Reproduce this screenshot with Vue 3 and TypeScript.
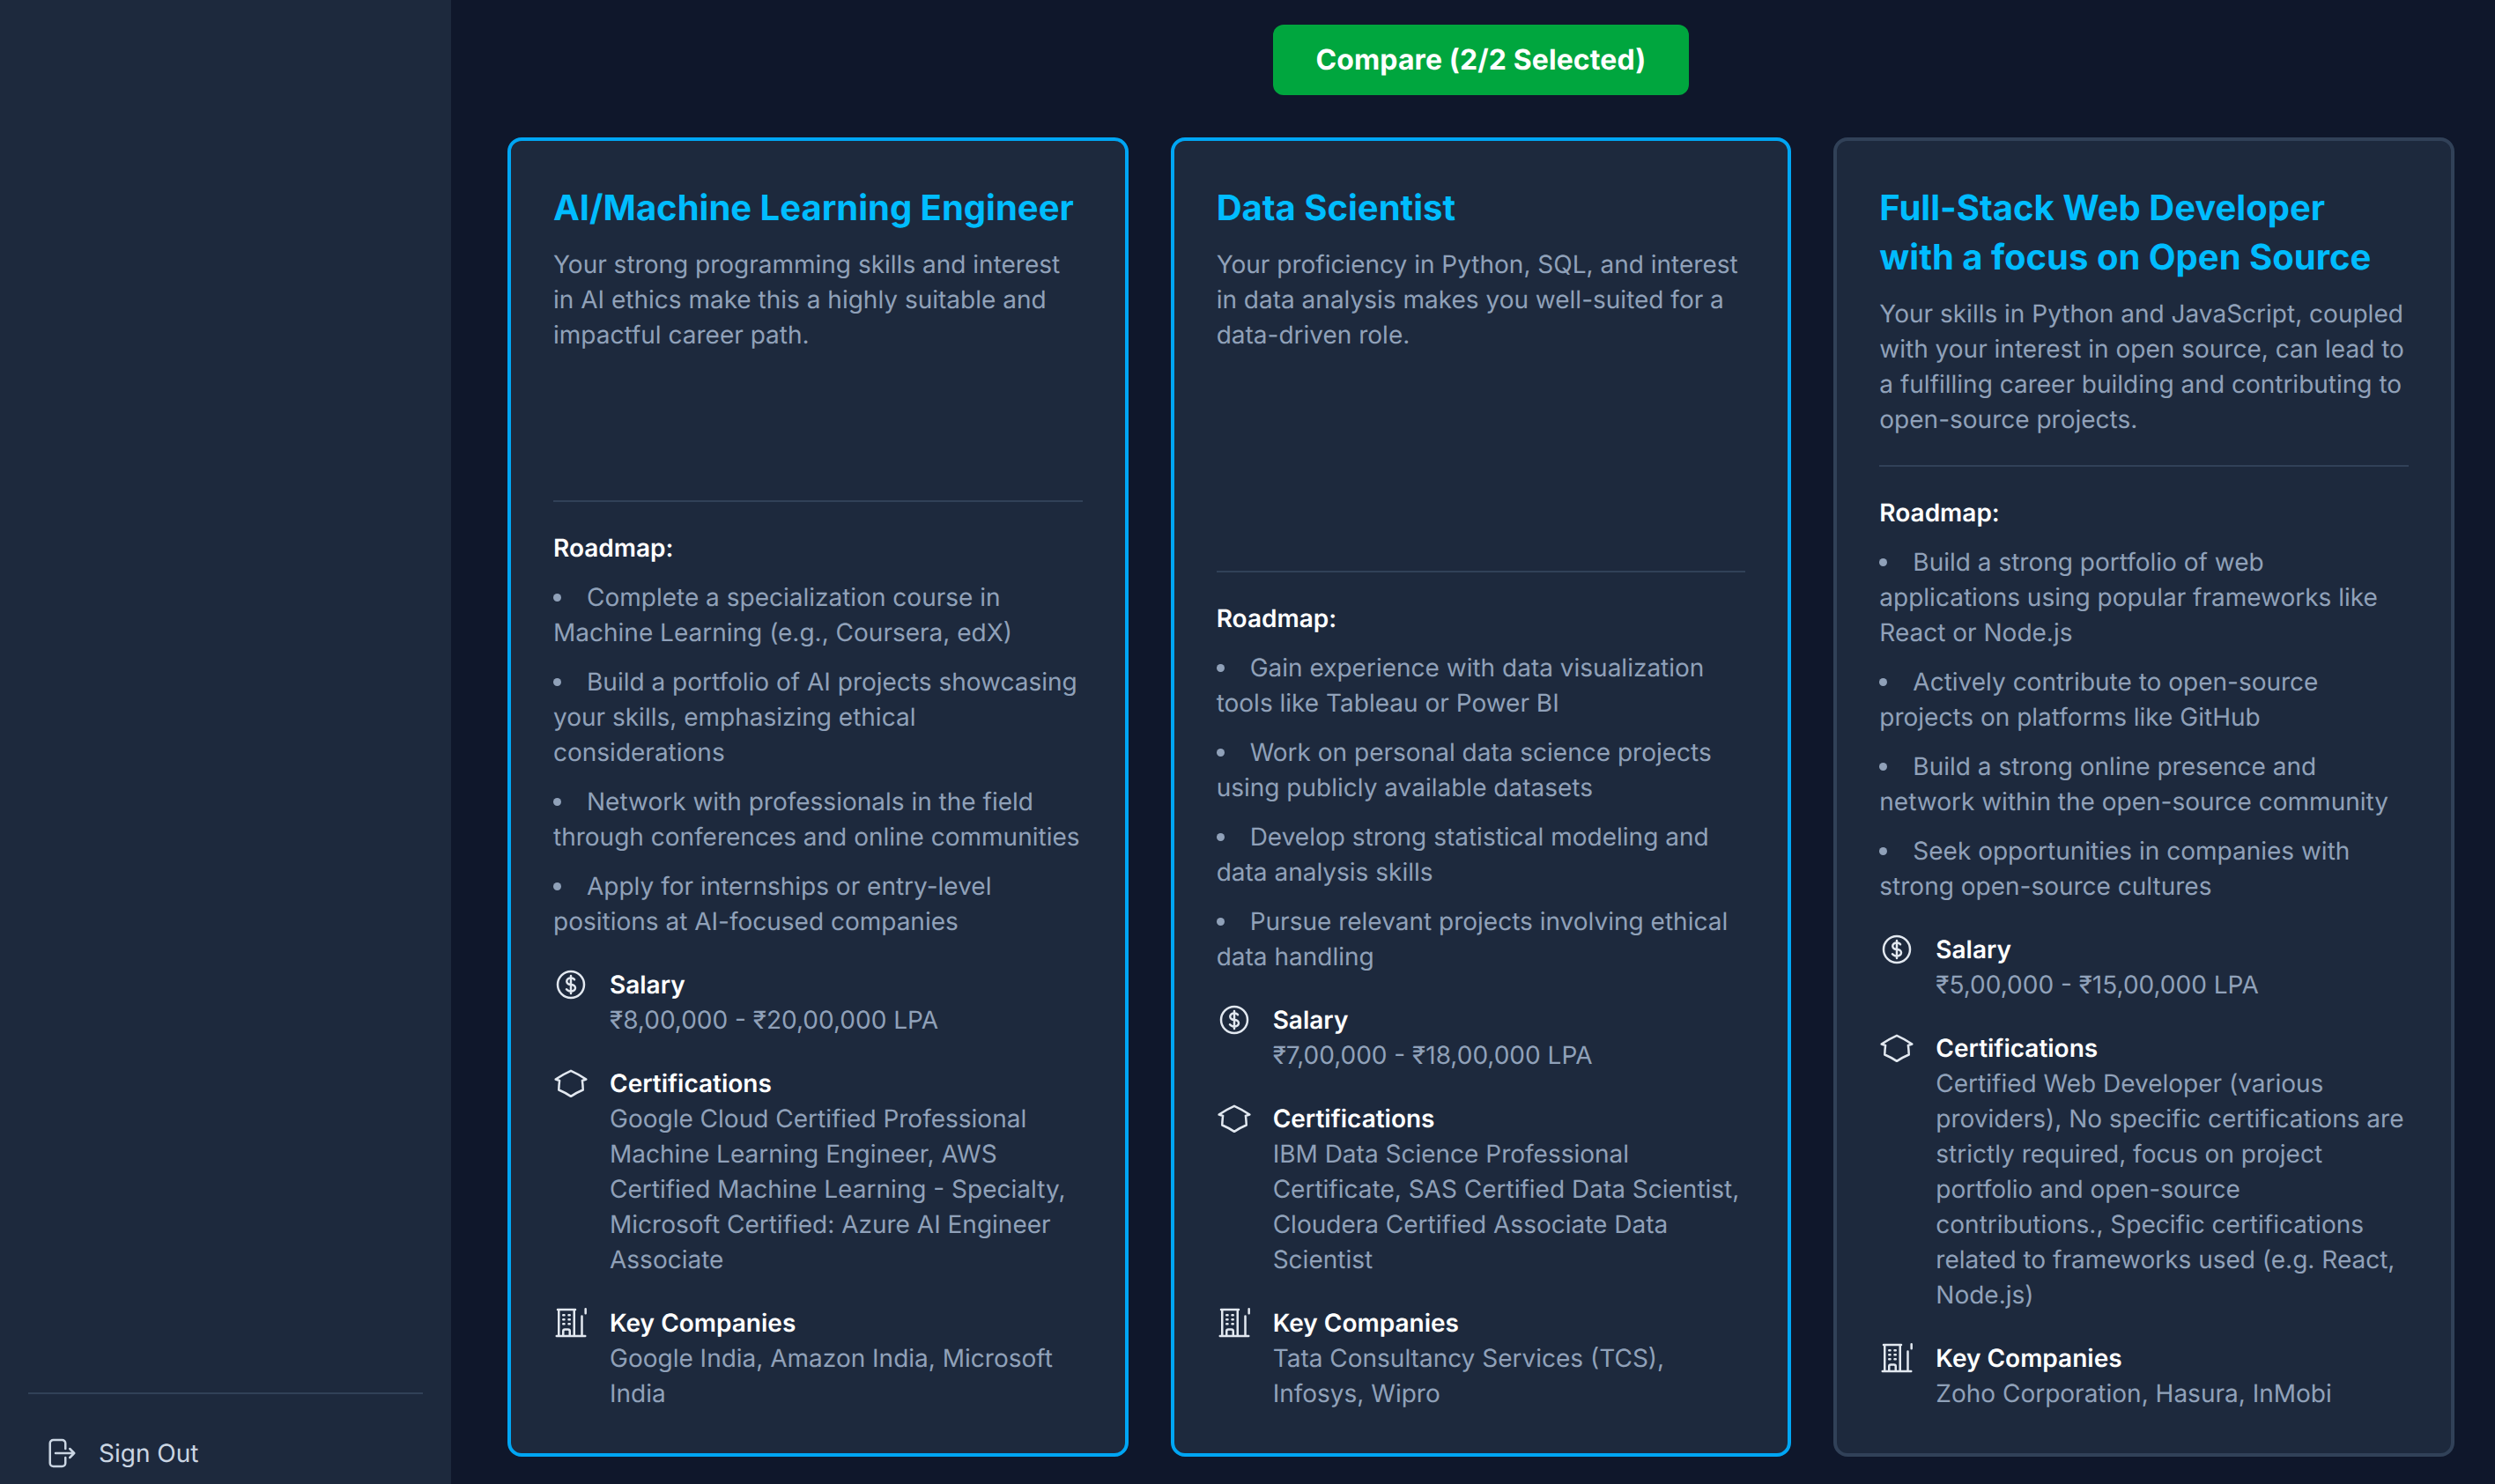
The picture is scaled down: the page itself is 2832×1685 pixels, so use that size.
<template>
  <div class="layout">
    <aside class="sidebar">
      <div class="sidebar-footer">
        <button class="sign-out">
          <svg class="icon" viewBox="0 0 24 24" fill="none" stroke="currentColor" stroke-width="1.5" stroke-linecap="round" stroke-linejoin="round">
            <path d="M15.75 9V5.25A2.25 2.25 0 0 0 13.5 3h-6a2.25 2.25 0 0 0-2.25 2.25v13.5A2.25 2.25 0 0 0 7.5 21h6a2.25 2.25 0 0 0 2.25-2.25V15m3 0 3-3m0 0-3-3m3 3H9" />
          </svg>
          <span>Sign Out</span>
        </button>
      </div>
    </aside>

    <main class="main">
      <div class="compare-row">
        <button class="compare-btn">Compare (2/2 Selected)</button>
      </div>

      <div class="cards">
        <article
          v-for="career in careers"
          :key="career.title"
          class="card"
          :class="{ selected: career.selected }"
        >
          <h2 class="title">{{ career.title }}</h2>
          <p class="desc">{{ career.desc }}</p>

          <div class="details">
            <h3 class="label">Roadmap:</h3>
            <ul class="roadmap">
              <li v-for="step in career.roadmap" :key="step">{{ step }}</li>
            </ul>

            <div class="info">
              <svg class="icon" viewBox="0 0 24 24" fill="none" stroke="currentColor" stroke-width="1.5" stroke-linecap="round" stroke-linejoin="round">
                <path d="M12 6v12m-3-2.818.879.659c1.171.879 3.07.879 4.242 0 1.172-.879 1.172-2.303 0-3.182C13.536 12.219 12.768 12 12 12c-.725 0-1.45-.22-2.003-.659-1.106-.879-1.106-2.303 0-3.182s2.9-.879 4.006 0l.415.33M21 12a9 9 0 1 1-18 0 9 9 0 0 1 18 0Z" />
              </svg>
              <div>
                <h4 class="label">Salary</h4>
                <p class="value">{{ career.salary }}</p>
              </div>
            </div>

            <div class="info">
              <svg class="icon" viewBox="0 0 24 24" fill="none" stroke="currentColor" stroke-width="1.5" stroke-linecap="round" stroke-linejoin="round">
                <path d="M4.26 10.147a60.438 60.438 0 0 0-.491 6.347A48.62 48.62 0 0 1 12 20.904a48.62 48.62 0 0 1 8.232-4.41 60.46 60.46 0 0 0-.491-6.347m-15.482 0a50.636 50.636 0 0 0-2.658-.813A59.906 59.906 0 0 1 12 3.493a59.903 59.903 0 0 1 10.399 5.84c-.896.248-1.783.52-2.658.814" />
              </svg>
              <div>
                <h4 class="label">Certifications</h4>
                <p class="value">{{ career.certifications }}</p>
              </div>
            </div>

            <div class="info">
              <svg class="icon" viewBox="0 0 24 24" fill="none" stroke="currentColor" stroke-width="1.5" stroke-linecap="round" stroke-linejoin="round">
                <path d="M2.25 21h19.5M3.75 3v18M14.25 3v18M19.5 7.5V21M22 2.5v3M6.75 6.75h.75m-.75 3h.75m-.75 3h.75m3-6h.75m-.75 3h.75m-.75 3h.75M6.75 21v-3.375c0-.621.504-1.125 1.125-1.125h2.25c.621 0 1.125.504 1.125 1.125V21M3 3h12" />
              </svg>
              <div>
                <h4 class="label">Key Companies</h4>
                <p class="value">{{ career.companies }}</p>
              </div>
            </div>
          </div>
        </article>
      </div>
    </main>
  </div>
</template>

<script setup lang="ts">
interface Career {
  title: string
  desc: string
  roadmap: string[]
  salary: string
  certifications: string
  companies: string
  selected: boolean
}

const careers: Career[] = [
  {
    title: 'AI/Machine Learning Engineer',
    desc: 'Your strong programming skills and interest in AI ethics make this a highly suitable and impactful career path.',
    roadmap: [
      'Complete a specialization course in Machine Learning (e.g., Coursera, edX)',
      'Build a portfolio of AI projects showcasing your skills, emphasizing ethical considerations',
      'Network with professionals in the field through conferences and online communities',
      'Apply for internships or entry-level positions at AI-focused companies'
    ],
    salary: '₹8,00,000 - ₹20,00,000 LPA',
    certifications: 'Google Cloud Certified Professional Machine Learning Engineer, AWS Certified Machine Learning - Specialty, Microsoft Certified: Azure AI Engineer Associate',
    companies: 'Google India, Amazon India, Microsoft India',
    selected: true
  },
  {
    title: 'Data Scientist',
    desc: 'Your proficiency in Python, SQL, and interest in data analysis makes you well-suited for a data-driven role.',
    roadmap: [
      'Gain experience with data visualization tools like Tableau or Power BI',
      'Work on personal data science projects using publicly available datasets',
      'Develop strong statistical modeling and data analysis skills',
      'Pursue relevant projects involving ethical data handling'
    ],
    salary: '₹7,00,000 - ₹18,00,000 LPA',
    certifications: 'IBM Data Science Professional Certificate, SAS Certified Data Scientist, Cloudera Certified Associate Data Scientist',
    companies: 'Tata Consultancy Services (TCS), Infosys, Wipro',
    selected: true
  },
  {
    title: 'Full-Stack Web Developer with a focus on Open Source',
    desc: 'Your skills in Python and JavaScript, coupled with your interest in open source, can lead to a fulfilling career building and contributing to open-source projects.',
    roadmap: [
      'Build a strong portfolio of web applications using popular frameworks like React or Node.js',
      'Actively contribute to open-source projects on platforms like GitHub',
      'Build a strong online presence and network within the open-source community',
      'Seek opportunities in companies with strong open-source cultures'
    ],
    salary: '₹5,00,000 - ₹15,00,000 LPA',
    certifications: 'Certified Web Developer (various providers), No specific certifications are strictly required, focus on project portfolio and open-source contributions., Specific certifications related to frameworks used (e.g. React, Node.js)',
    companies: 'Zoho Corporation, Hasura, InMobi',
    selected: false
  }
]
</script>

<style>
html,
body {
  margin: 0;
  background: #0f172b;
}
</style>

<style scoped>
.layout {
  display: flex;
  height: 1685px;
  overflow: hidden;
  background: #0f172b;
  font-family: Inter, "Liberation Sans", sans-serif;
  font-size: 28px;
  line-height: 40px;
  text-rendering: geometricPrecision;
}

.sidebar {
  flex: 0 0 512px;
  display: flex;
  flex-direction: column;
  justify-content: flex-end;
  box-sizing: border-box;
  padding: 0 32px;
  background: #1d293d;
}

.sidebar-footer {
  box-sizing: border-box;
  height: 104px;
  border-top: 2px solid #314158;
  padding-top: 47px;
}

.sign-out {
  display: flex;
  align-items: center;
  gap: 24px;
  padding: 0 16px;
  border: 0;
  background: none;
  color: #cad5e2;
  font: inherit;
  text-rendering: inherit;
}

.main {
  flex: 1;
  min-width: 0;
  box-sizing: border-box;
  padding: 28px 46px 0 64px;
}

.compare-row {
  display: flex;
  justify-content: center;
  margin-bottom: 48px;
}

.compare-btn {
  padding: 16px 49px;
  border: 0;
  border-radius: 12px;
  background: #00a63e;
  color: #fff;
  font: inherit;
  font-size: 32px;
  line-height: 48px;
  font-weight: 700;
  letter-spacing: 0.1px;
  text-rendering: inherit;
}

.cards {
  display: grid;
  grid-template-columns: repeat(3, 1fr);
  gap: 48px;
}

.card {
  display: flex;
  flex-direction: column;
  padding: 48px;
  border: 4px solid #314158;
  border-radius: 16px;
  background: #1d293d;
  color: #90a1b9;
}

.card.selected {
  border-color: #00a6f4;
}

.title {
  margin: 0 0 16px;
  color: #00bcff;
  font-size: 40px;
  line-height: 56px;
  font-weight: 700;
  text-wrap: balance;
}

.desc {
  flex-grow: 1;
  margin: 0 0 32px;
}

.details {
  border-top: 2px solid #314158;
  padding-top: 32px;
}

.label {
  margin: 0;
  color: #fff;
  font-size: 28px;
  line-height: 40px;
  font-weight: 600;
}

.roadmap {
  display: flex;
  flex-direction: column;
  gap: 16px;
  margin: 16px 0 0;
  padding: 0;
  list-style: disc inside;
}

.info {
  display: flex;
  gap: 24px;
  margin-top: 32px;
}

.info .icon {
  color: #e2e8f0;
}

.value {
  margin: 0;
}

.icon {
  flex: 0 0 40px;
  width: 40px;
  height: 40px;
}
</style>
